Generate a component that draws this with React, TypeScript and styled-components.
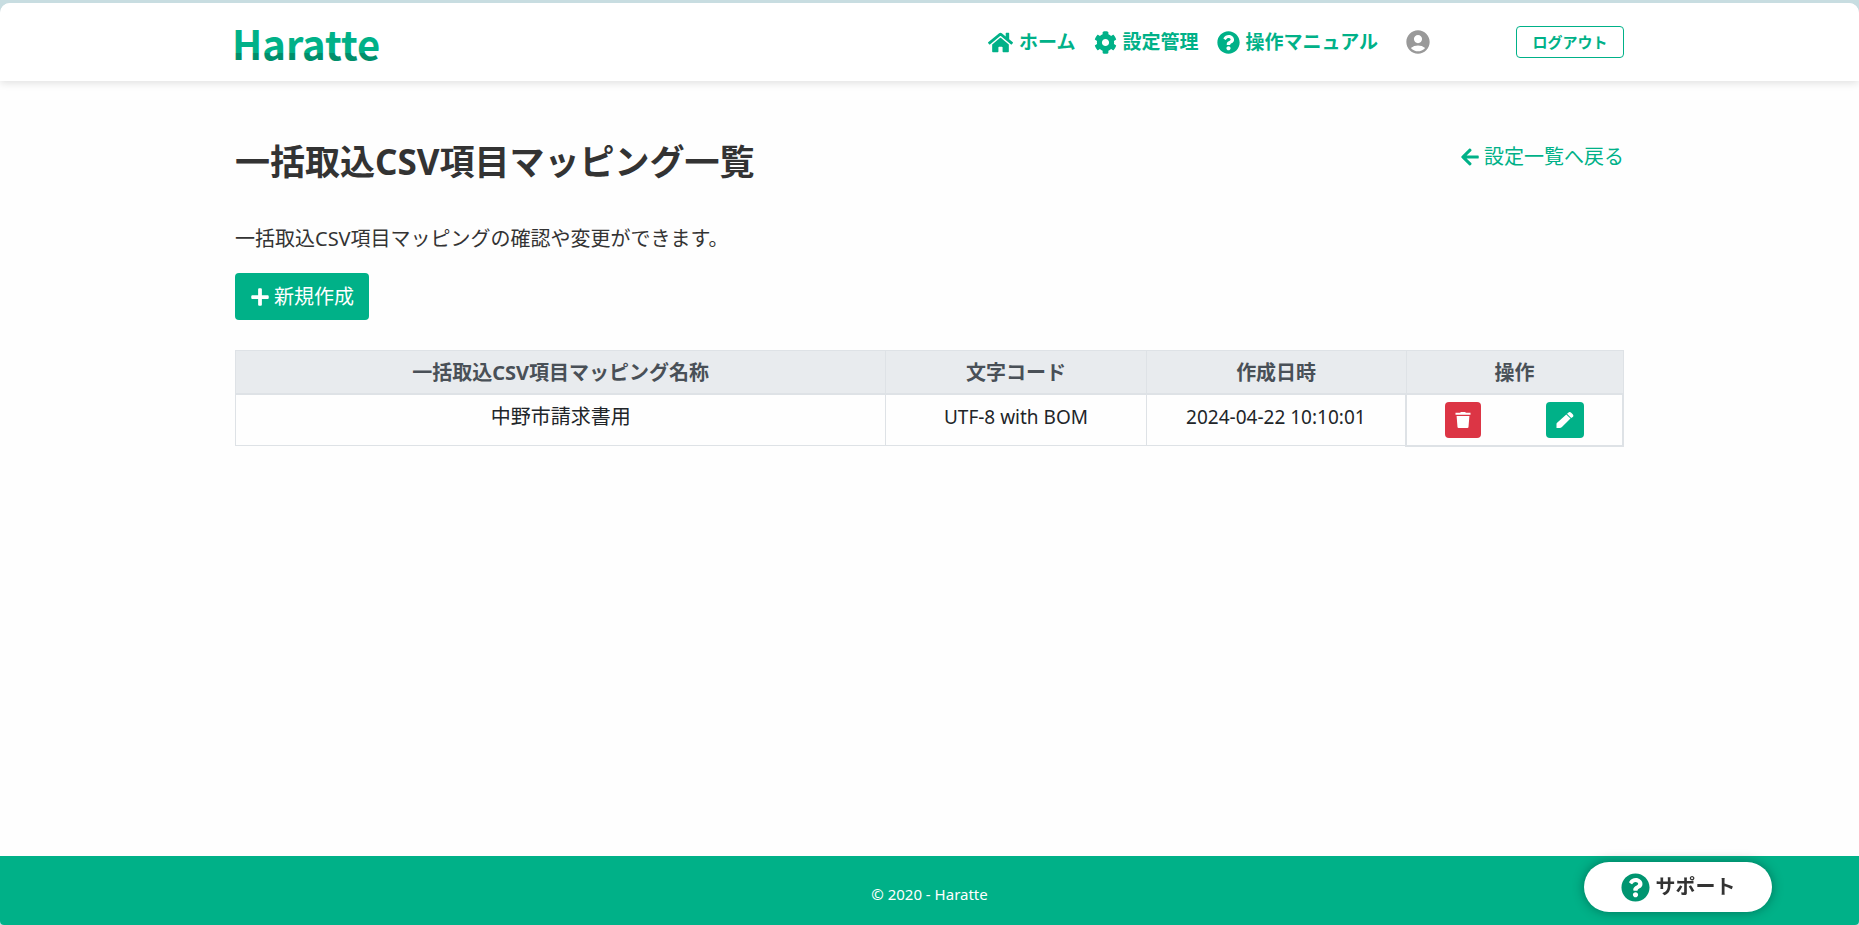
import React from "react";
import styled, { createGlobalStyle } from "styled-components";
import { FaHome, FaCog, FaQuestionCircle, FaArrowLeft, FaPlus } from "react-icons/fa";
import { MdAccountCircle } from "react-icons/md";

const GREEN = "#00b188";
const DARK_GREEN = "#009570";

const GlobalStyle = createGlobalStyle`
  * { box-sizing: border-box; }
  body {
    margin: 0;
    background: #c8dde1;
    color: #212529;
    font-family: "Noto Sans", "Noto Sans CJK JP", sans-serif;
    font-size: 20px;
    line-height: 30px;
  }
`;

const Frame = styled.div`
  border-top: 3px solid #c8dde1;
`;

const Page = styled.div`
  min-height: calc(100vh - 3px);
  display: flex;
  flex-direction: column;
  background: #fefefe;
  border-radius: 10px 10px 4px 4px;
  overflow: hidden;
`;

const Container = styled.div`
  width: calc(100% - 32px);
  max-width: 1389px;
  margin: 0 auto;
`;

const Header = styled.header`
  background: #fff;
  box-shadow: 0 2px 8px rgba(0, 0, 0, 0.12);
`;

const Bar = styled(Container)`
  min-height: 78px;
  display: flex;
  align-items: center;
  justify-content: space-between;
`;

const LogoLink = styled.a`
  display: flex;
`;

const LogoMark = styled.svg`
  overflow: visible;
`;

const LogoText = styled.text`
  font-family: "Noto Sans CJK JP", sans-serif;
  font-size: 40px;
  font-weight: 700;
`;

const Nav = styled.nav`
  display: flex;
  align-items: center;
`;

const NavLink = styled.a`
  display: flex;
  align-items: center;
  gap: 6px;
  margin-right: 18px;
  color: ${GREEN};
  font-size: 19px;
  line-height: 28px;
  font-weight: 700;
  text-decoration: none;
`;

const Account = styled.a`
  display: flex;
  margin: 0 84px 0 8px;
  color: #999;
`;

const Logout = styled.button`
  width: 108px;
  height: 32px;
  padding: 0;
  border: 1px solid ${GREEN};
  border-radius: 4px;
  background: #fff;
  color: ${GREEN};
  font: inherit;
  font-size: 15px;
  line-height: 20px;
  font-weight: 700;
`;

const Main = styled(Container).attrs({ as: "main" })`
  flex: 1;
  padding-top: 55px;
`;

const TitleRow = styled.div`
  display: flex;
  justify-content: space-between;
  align-items: flex-start;
`;

const Title = styled.h1`
  margin: 0;
  color: #333;
  font-size: 35px;
  line-height: 52px;
  font-weight: 700;
`;

const BackLink = styled.a`
  display: flex;
  align-items: center;
  gap: 4px;
  margin-top: 6px;
  color: ${GREEN};
  text-decoration: none;
`;

const Lead = styled.p`
  margin: 36px 0 19px;
  color: #333;
`;

const CreateButton = styled.button`
  display: flex;
  align-items: center;
  gap: 4px;
  height: 47px;
  padding: 0 15px;
  border: 0;
  border-radius: 4px;
  background: ${GREEN};
  color: #fff;
  font: inherit;
`;

const Table = styled.table`
  width: 100%;
  margin-top: 30px;
  table-layout: fixed;
  border-collapse: collapse;
  text-align: center;
`;

const Th = styled.th<{ $share: number }>`
  width: ${(p) => (p.$share * 100) / 32}%;
  height: 43px;
  padding: 2px 0 0;
  border: 1px solid #dee2e6;
  border-bottom-width: 2px;
  background: #e8ebee;
  color: #495057;
  font-weight: 700;
`;

const Td = styled.td<{ $latin?: boolean }>`
  height: 52px;
  padding: 7px 0 0;
  border: 1px solid #dee2e6;
  vertical-align: top;
  font-size: ${(p) => (p.$latin ? 19 : 20)}px;
`;

const ActionTd = styled.td`
  padding: 0;
  border: 2px solid #dee2e6;
`;

const Actions = styled.div`
  display: flex;
  justify-content: space-between;
  padding: 0 38px;
`;

const IconButton = styled.button<{ $color: string }>`
  display: flex;
  align-items: center;
  height: 36px;
  padding: 0 10px;
  border: 0;
  border-radius: 4px;
  background: ${(p) => p.$color};
  color: #fff;
`;

const Footer = styled.footer`
  padding: 23px 0 16px;
  background: ${GREEN};
  color: #fff;
  text-align: center;
  font-size: 15px;
  line-height: 30px;
`;

const Support = styled.button`
  position: fixed;
  right: 87px;
  bottom: 13px;
  display: flex;
  align-items: center;
  justify-content: center;
  gap: 6px;
  width: 188px;
  height: 50px;
  padding: 0;
  border: 0;
  border-radius: 25px;
  background: #fff;
  box-shadow: 0 0 12px rgba(0, 0, 0, 0.35);
  color: #333;
  font: inherit;
  font-weight: 700;

  svg {
    color: ${DARK_GREEN};
  }
`;

function Logo() {
  return (
    <LogoMark width="150" height="64" viewBox="0 0 150 64" role="img" aria-label="Haratte">
      <defs>
        <linearGradient id="logo-fill" gradientUnits="userSpaceOnUse" x1="0" y1="0" x2="0" y2="64">
          <stop offset="0.67" stopColor={GREEN} />
          <stop offset="0.67" stopColor="#008f6b" />
        </linearGradient>
      </defs>
      <LogoText x="-3" y="50" fill="url(#logo-fill)">Haratte</LogoText>
    </LogoMark>
  );
}

function TrashIcon() {
  return (
    <svg width="16" height="16" viewBox="0 0 16 16" fill="currentColor" aria-hidden="true">
      <path d="M5.5 0h5v.8H15.500v1.900H.5V.8h5zM1.600 4h12.800l-.9 11q-.1 1-1.100 1H3.600q-1 0-1.100-1z" />
    </svg>
  );
}

function PencilIcon() {
  return (
    <svg width="18" height="16" viewBox="0 0 18 16" fill="currentColor" aria-hidden="true">
      <path d="M.5 16V12q0-.7.6-1.300L10.300 2.500l4.200 4L6.200 14.700Q5 16 3.600 16z" />
      <path d="M11 1.800 12.300.7q1.400-1.200 2.900.1l1.500 1.500q1.300 1.300.1 2.700L15.200 5.900z" />
    </svg>
  );
}

const mappings = [
  { name: "中野市請求書用", encoding: "UTF-8 with BOM", createdAt: "2024-04-22 10:10:01" },
];

export default function App() {
  return (
    <Frame>
      <GlobalStyle />
      <Page>
        <Header>
          <Bar>
            <LogoLink href="#"><Logo /></LogoLink>
            <Nav>
              <NavLink href="#"><FaHome size={25} />ホーム</NavLink>
              <NavLink href="#"><FaCog size={23} />設定管理</NavLink>
              <NavLink href="#"><FaQuestionCircle size={23} />操作マニュアル</NavLink>
              <Account href="#" aria-label="アカウント"><MdAccountCircle size={28} /></Account>
              <Logout type="button">ログアウト</Logout>
            </Nav>
          </Bar>
        </Header>
        <Main>
          <TitleRow>
            <Title>一括取込CSV項目マッピング一覧</Title>
            <BackLink href="#"><FaArrowLeft size={20} />設定一覧へ戻る</BackLink>
          </TitleRow>
          <Lead>一括取込CSV項目マッピングの確認や変更ができます。</Lead>
          <CreateButton type="button"><FaPlus size={20} />新規作成</CreateButton>
          <Table>
            <thead>
              <tr>
                <Th $share={15}>一括取込CSV項目マッピング名称</Th>
                <Th $share={6}>文字コード</Th>
                <Th $share={6}>作成日時</Th>
                <Th $share={5}>操作</Th>
              </tr>
            </thead>
            <tbody>
              {mappings.map((m) => (
                <tr key={m.name}>
                  <Td>{m.name}</Td>
                  <Td $latin>{m.encoding}</Td>
                  <Td $latin>{m.createdAt}</Td>
                  <ActionTd>
                    <Actions>
                      <IconButton type="button" aria-label="削除" $color="#dc3545"><TrashIcon /></IconButton>
                      <IconButton type="button" aria-label="編集" $color={GREEN}><PencilIcon /></IconButton>
                    </Actions>
                  </ActionTd>
                </tr>
              ))}
            </tbody>
          </Table>
        </Main>
        <Footer>© 2020 - Haratte</Footer>
      </Page>
      <Support type="button"><FaQuestionCircle size={29} />サポート</Support>
    </Frame>
  );
}
